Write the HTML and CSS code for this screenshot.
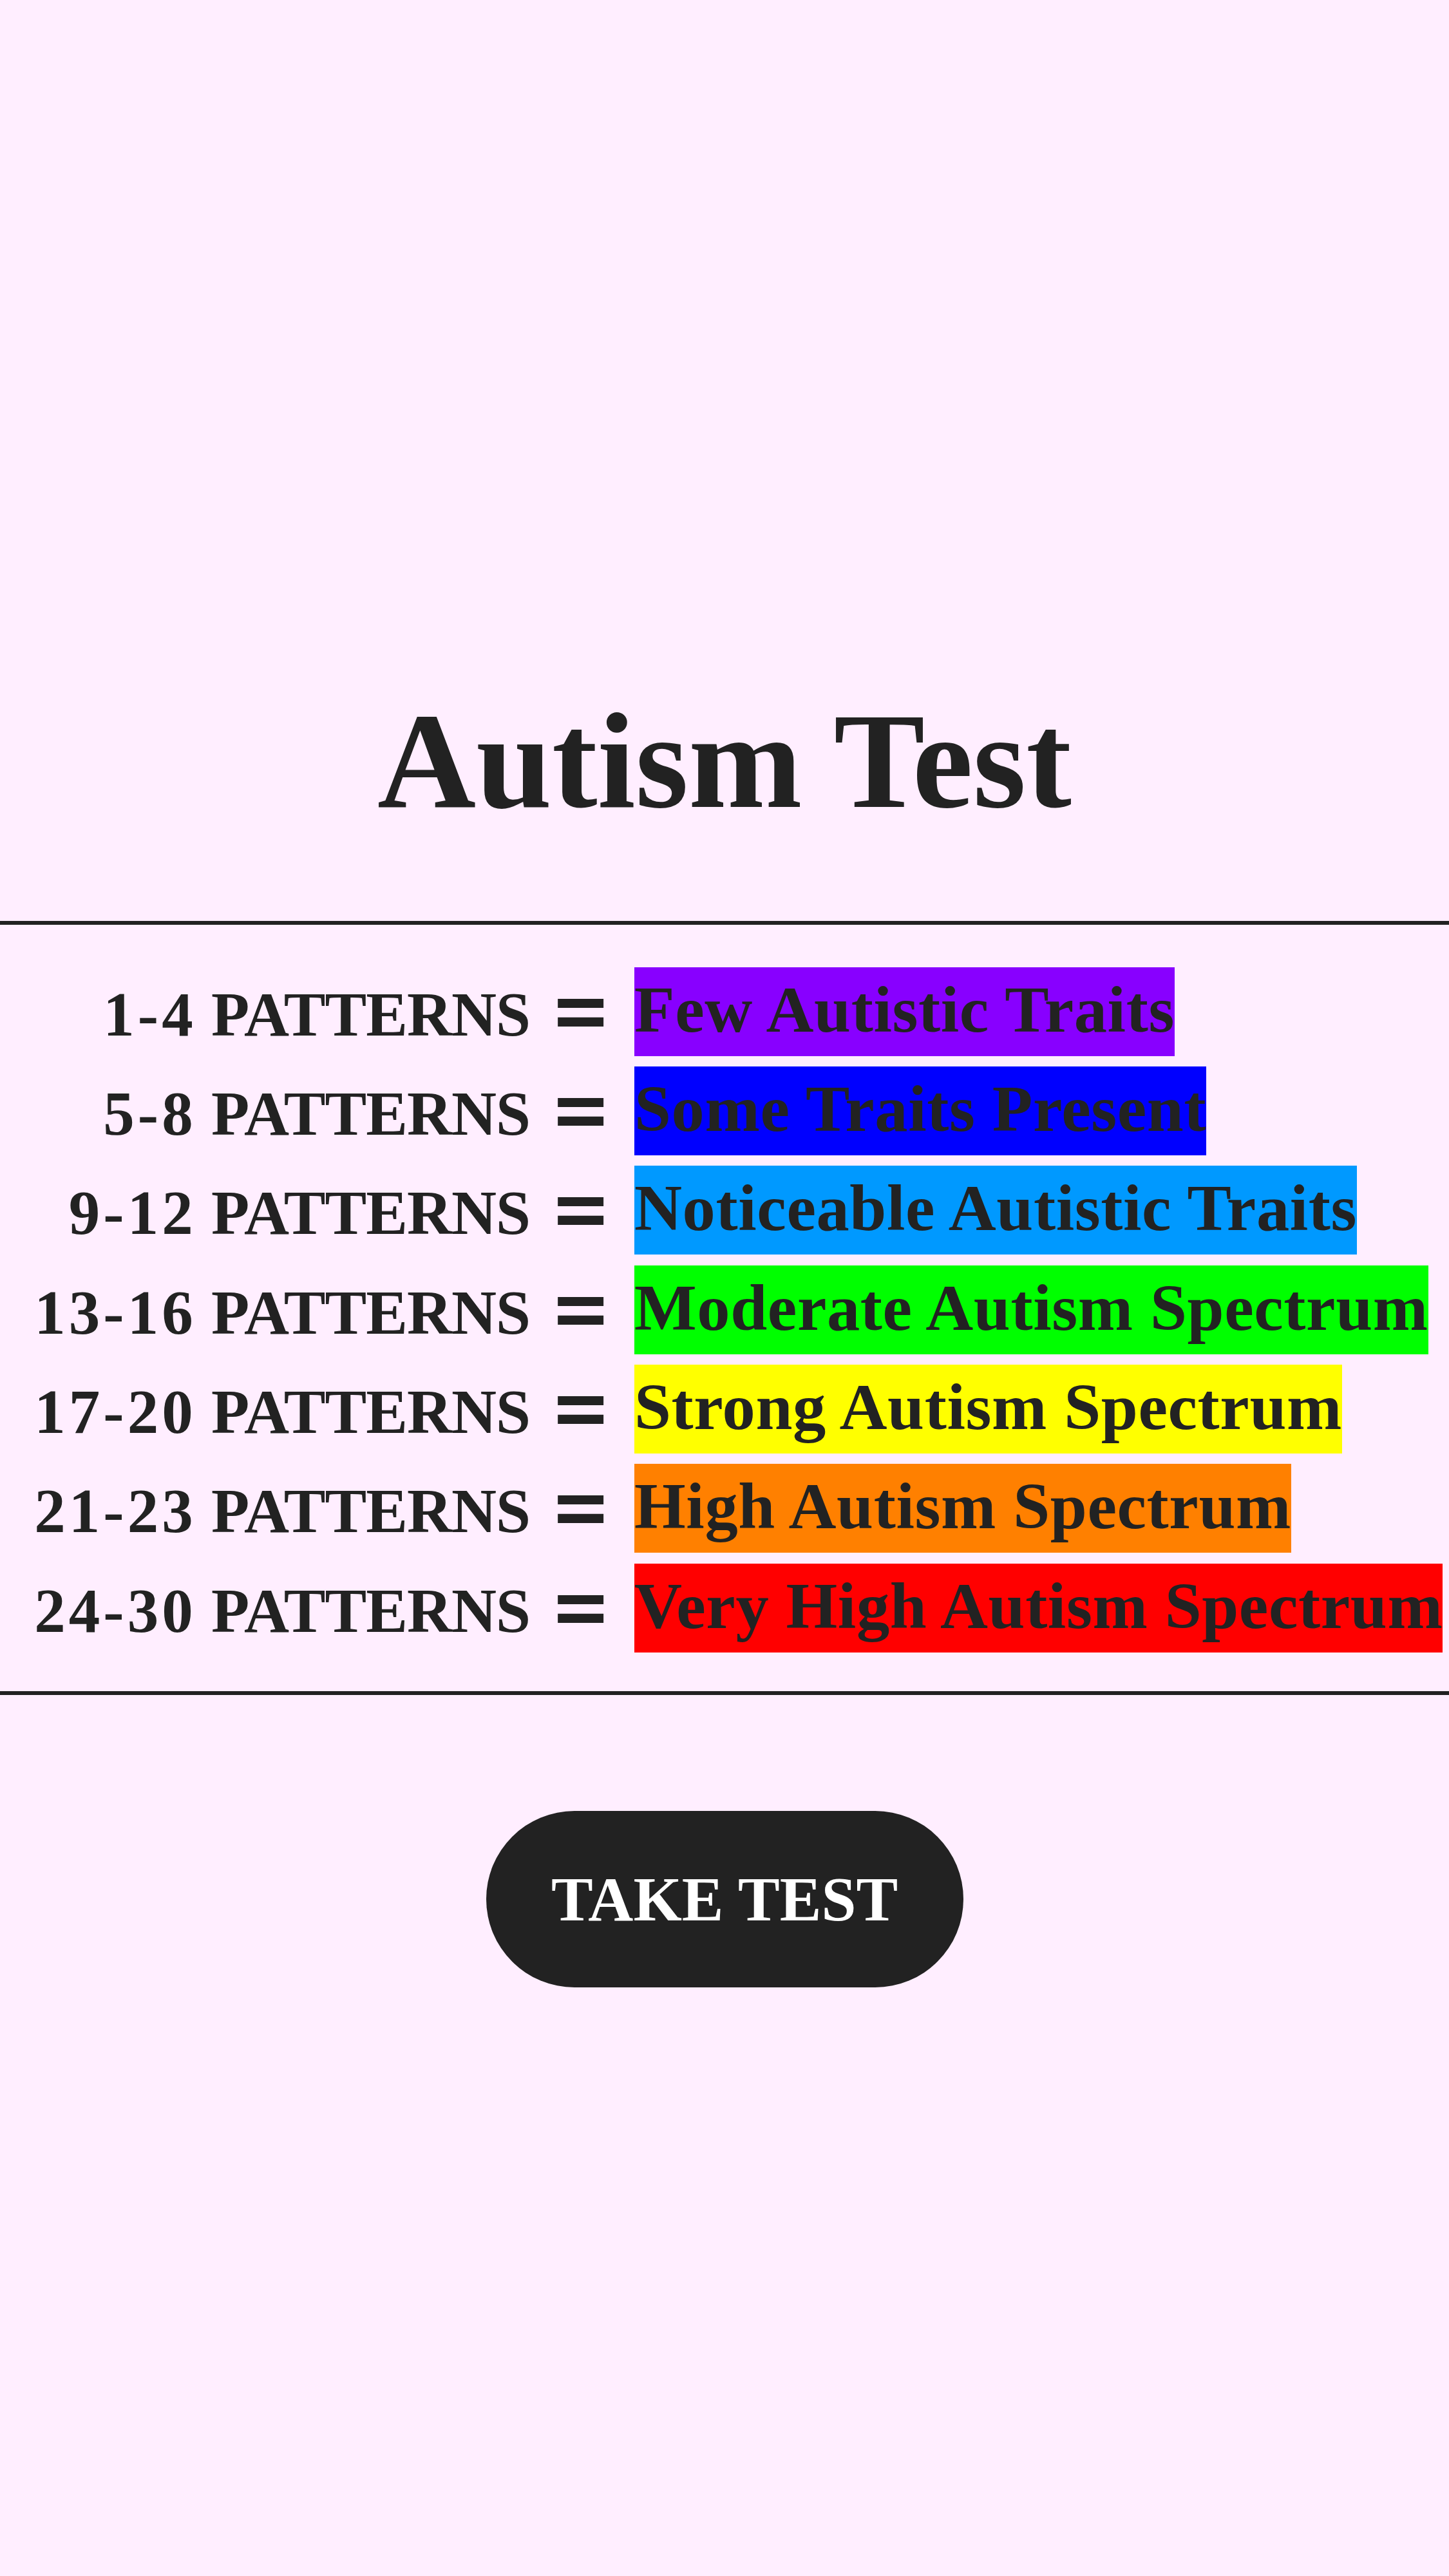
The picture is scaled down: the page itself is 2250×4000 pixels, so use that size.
FILE: index.html
```html
<!DOCTYPE html>
<html lang="en">
<head>
<meta charset="utf-8">
<title>Autism Test</title>
<link rel="stylesheet" href="styles.css">
</head>
<body>
<main class="page">
  <h1 class="title">Autism Test</h1>

  <section class="scale">
    <div class="label"><span class="num">1-4</span> PATTERNS<span class="eq">=</span></div>
    <div class="level level-few">Few Autistic Traits</div>

    <div class="label"><span class="num">5-8</span> PATTERNS<span class="eq">=</span></div>
    <div class="level level-some">Some Traits Present</div>

    <div class="label"><span class="num">9-12</span> PATTERNS<span class="eq">=</span></div>
    <div class="level level-noticeable">Noticeable Autistic Traits</div>

    <div class="label"><span class="num">13-16</span> PATTERNS<span class="eq">=</span></div>
    <div class="level level-moderate">Moderate Autism Spectrum</div>

    <div class="label"><span class="num">17-20</span> PATTERNS<span class="eq">=</span></div>
    <div class="level level-strong">Strong Autism Spectrum</div>

    <div class="label"><span class="num">21-23</span> PATTERNS<span class="eq">=</span></div>
    <div class="level level-high">High Autism Spectrum</div>

    <div class="label"><span class="num">24-30</span> PATTERNS<span class="eq">=</span></div>
    <div class="level level-very-high">Very High Autism Spectrum</div>
  </section>

  <div class="actions">
    <button class="take-test" type="button">TAKE TEST</button>
  </div>
</main>
</body>
</html>
```

FILE: styles.css
```css
html, body {
  margin: 0;
  padding: 0;
}

body {
  background: #ffeeff;
  color: #222222;
  font-family: "Liberation Serif", "Times New Roman", serif;
  font-weight: 700;
}

.page {
  padding-top: 1056px;
  padding-bottom: 600px;
}

.title {
  margin: 0 0 122px;
  font-size: 212px;
  line-height: 252px;
  font-weight: 700;
  text-align: center;
}

/* score ranges and their result levels */
.scale {
  display: grid;
  grid-template-columns: 943px max-content;
  column-gap: 42px;
  row-gap: 16.4px;
  padding: 65.5px 0 60.6px;
  border-top: 6px solid #222222;
  border-bottom: 6px solid #222222;
}

.label {
  text-align: right;
  white-space: nowrap;
  font-size: 97px;
  letter-spacing: -1px;
  line-height: 128px;
  padding-top: 10px;
  height: 128px;
}

.num {
  letter-spacing: 5px;
}

.eq {
  margin-left: 38px;
  font-size: 144px;
  line-height: 0;
  letter-spacing: 0;
  vertical-align: -12px;
  -webkit-text-stroke: 4px #222222;
}

.level {
  justify-self: start;
  white-space: nowrap;
  font-size: 102.5px;
  letter-spacing: 0.6px;
  line-height: 131px;
  height: 131px;
  padding-bottom: 7px;
}

.level-few { background: #8800ff; }
.level-some { background: #0000ff; }
.level-noticeable { background: #0099ff; }
.level-moderate { background: #00ff00; }
.level-strong { background: #ffff00; }
.level-high { background: #ff8000; }
.level-very-high { background: #ff0000; }

.actions {
  display: flex;
  justify-content: center;
  padding-top: 180px;
}

.take-test {
  width: 741px;
  height: 274px;
  border: 0;
  border-radius: 137px;
  background: #222222;
  color: #ffffff;
  font-family: "Liberation Serif", "Times New Roman", serif;
  font-weight: 700;
  font-size: 97px;
  padding: 0;
  cursor: pointer;
}
```
